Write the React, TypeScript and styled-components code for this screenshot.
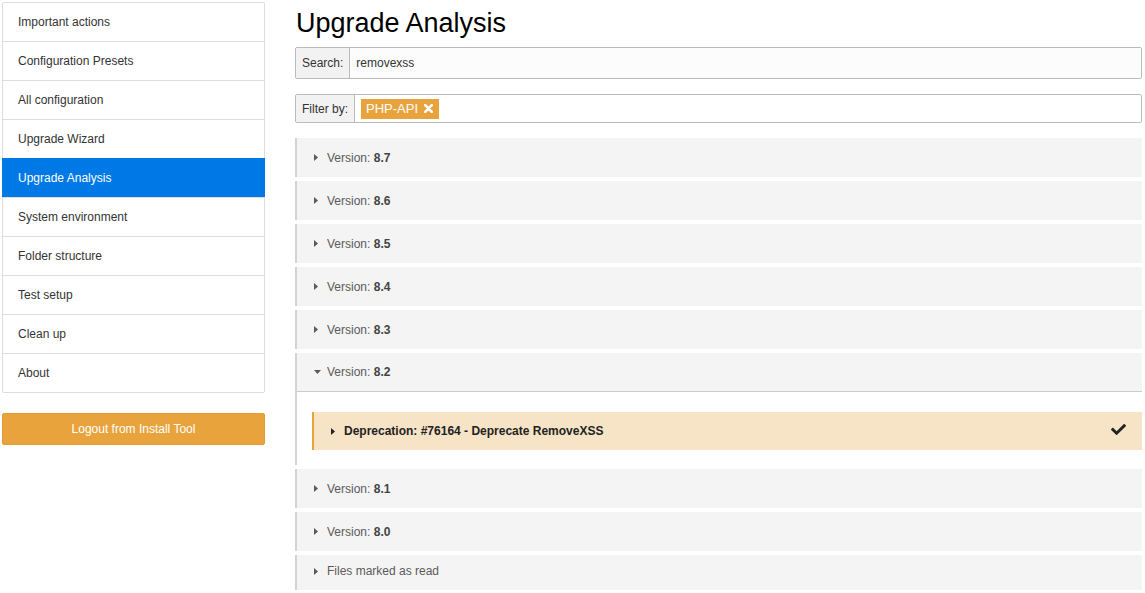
import React from "react";
import styled, { createGlobalStyle } from "styled-components";
import { FaCheck } from "react-icons/fa";

const Global = createGlobalStyle`
  html, body { margin: 0; padding: 0; background: #fff; }
  body {
    font-family: "Liberation Sans", Arial, sans-serif;
    font-size: 12px;
    color: #333;
  }
  * { box-sizing: border-box; }
`;

const Page = styled.div`
  display: grid;
  grid-template-columns: 263px 1fr;
  column-gap: 30px;
  padding: 2px 3px 0 2px;
  height: 593px;
  overflow: hidden;
`;

const Side = styled.aside`
  display: flex;
  flex-direction: column;
`;

const NavList = styled.nav`
  display: flex;
  flex-direction: column;
  border: 1px solid #ddd;
  border-radius: 2px;
`;

const NavItem = styled.div<{ $active?: boolean }>`
  height: 39px;
  display: flex;
  align-items: center;
  background: ${(p) => (p.$active ? "#0078e6" : "#fff")};
  color: ${(p) => (p.$active ? "#fff" : "#333")};
  border-top: 1px solid ${(p) => (p.$active ? "#0078e6" : "#ddd")};
  margin: ${(p) => (p.$active ? "0 -1px" : "0")};
  padding-left: ${(p) => (p.$active ? "16px" : "15px")};
  &:first-child { border-top: none; height: 38px; }
`;

const Logout = styled.button`
  margin-top: 20px;
  height: 32px;
  background: #e8a33d;
  border: 1px solid #e39b2f;
  border-radius: 2px;
  color: #fff;
  font-family: inherit;
  font-size: 12px;
`;

const Main = styled.main`
  display: flex;
  flex-direction: column;
  min-width: 0;
`;

const Title = styled.h1`
  margin: 6px 0 0 1px;
  font-size: 27px;
  line-height: 31px;
  font-weight: 400;
  color: #000;
`;

const InputGroup = styled.div<{ $h: number; $mt: number }>`
  display: flex;
  height: ${(p) => p.$h}px;
  margin-top: ${(p) => p.$mt}px;
  border: 1px solid #bbb;
  border-radius: 2px;
`;

const Addon = styled.div`
  display: flex;
  align-items: center;
  padding: 0 6px;
  background: #f2f2f2;
  border-right: 1px solid #bbb;
  color: #333;
`;

const Field = styled.div<{ $bg: string }>`
  flex: 1;
  display: flex;
  align-items: center;
  padding: 0 6px;
  background: ${(p) => p.$bg};
  color: #333;
`;

const Tag = styled.span`
  display: inline-flex;
  align-items: center;
  gap: 6px;
  height: 20px;
  padding: 0 6px 0 5px;
  background: #e8a33d;
  color: #fff;
  font-size: 13px;
`;

const Panels = styled.div`
  display: flex;
  flex-direction: column;
  gap: 4px;
  margin-top: 15px;
`;

const Panel = styled.section`
  border-left: 2px solid #d3d3d3;
  background: #f4f4f4;
  display: flex;
  flex-direction: column;
`;

const PanelHead = styled.div<{ $open?: boolean; $compact?: boolean }>`
  height: ${(p) => (p.$compact ? 35 : 39)}px;
  padding-bottom: ${(p) => (p.$compact ? 3 : 0)}px;
  display: flex;
  align-items: center;
  padding-left: 17px;
  gap: 5px;
  color: #5a5a5a;
  border-bottom: ${(p) => (p.$open ? "1px solid #ccc" : "none")};
  b { color: #444; }
`;

const PanelBody = styled.div`
  background: #fff;
  padding: 20px 0 15px 15px;
`;

const Item = styled.div`
  height: 38px;
  display: flex;
  align-items: center;
  gap: 5px;
  padding: 0 16px 0 17px;
  border-left: 2px solid #e8a33d;
  background: #f7e3c5;
  color: #222;
  font-weight: 700;
  svg.check { width: 15px; height: 15px; color: #222; margin-top: -3px; }
`;

const ItemTitle = styled.div`
  flex: 1;
`;

const CaretBox = styled.div`
  flex: none;
  width: 8px;
  display: flex;
  align-items: center;
`;

const Caret = ({ down }: { down?: boolean }) => (
  <CaretBox>
    {down ? (
      <svg width="7" height="4" viewBox="0 0 7 4">
        <path d="M0 0h7L3.5 4z" fill="currentColor" />
      </svg>
    ) : (
      <svg width="4" height="7" viewBox="0 0 4 7">
        <path d="M0 0v7l4-3.5z" fill="currentColor" />
      </svg>
    )}
  </CaretBox>
);

const Cross = () => (
  <svg width="9" height="9" viewBox="0 0 9 9" style={{ flex: "none" }}>
    <path d="M1.2 1.2l6.6 6.6M7.8 1.2L1.2 7.8" stroke="#fff" strokeWidth="2.6" strokeLinecap="round" />
  </svg>
);

const nav = [
  "Important actions",
  "Configuration Presets",
  "All configuration",
  "Upgrade Wizard",
  "Upgrade Analysis",
  "System environment",
  "Folder structure",
  "Test setup",
  "Clean up",
  "About",
];

const before = ["8.7", "8.6", "8.5", "8.4", "8.3"];
const after = ["8.1", "8.0"];

export default function App() {
  return (
    <>
      <Global />
      <Page>
        <Side>
          <NavList>
            {nav.map((n) => (
              <NavItem key={n} $active={n === "Upgrade Analysis"}>
                {n}
              </NavItem>
            ))}
          </NavList>
          <Logout>Logout from Install Tool</Logout>
        </Side>
        <Main>
          <Title>Upgrade Analysis</Title>
          <InputGroup $h={32} $mt={8}>
            <Addon>Search:</Addon>
            <Field $bg="#fcfcfc">removexss</Field>
          </InputGroup>
          <InputGroup $h={29} $mt={15}>
            <Addon>Filter by:</Addon>
            <Field $bg="#fff">
              <Tag>
                PHP-API <Cross />
              </Tag>
            </Field>
          </InputGroup>
          <Panels>
            {before.map((v) => (
              <Panel key={v}>
                <PanelHead>
                  <Caret />
                  <span>
                    Version: <b>{v}</b>
                  </span>
                </PanelHead>
              </Panel>
            ))}
            <Panel>
              <PanelHead $open>
                <Caret down />
                <span>
                  Version: <b>8.2</b>
                </span>
              </PanelHead>
              <PanelBody>
                <Item>
                  <Caret />
                  <ItemTitle>Deprecation: #76164 - Deprecate RemoveXSS</ItemTitle>
                  <FaCheck className="check" />
                </Item>
              </PanelBody>
            </Panel>
            {after.map((v) => (
              <Panel key={v}>
                <PanelHead>
                  <Caret />
                  <span>
                    Version: <b>{v}</b>
                  </span>
                </PanelHead>
              </Panel>
            ))}
            <Panel>
              <PanelHead $compact>
                <Caret />
                <span>Files marked as read</span>
              </PanelHead>
            </Panel>
          </Panels>
        </Main>
      </Page>
    </>
  );
}
